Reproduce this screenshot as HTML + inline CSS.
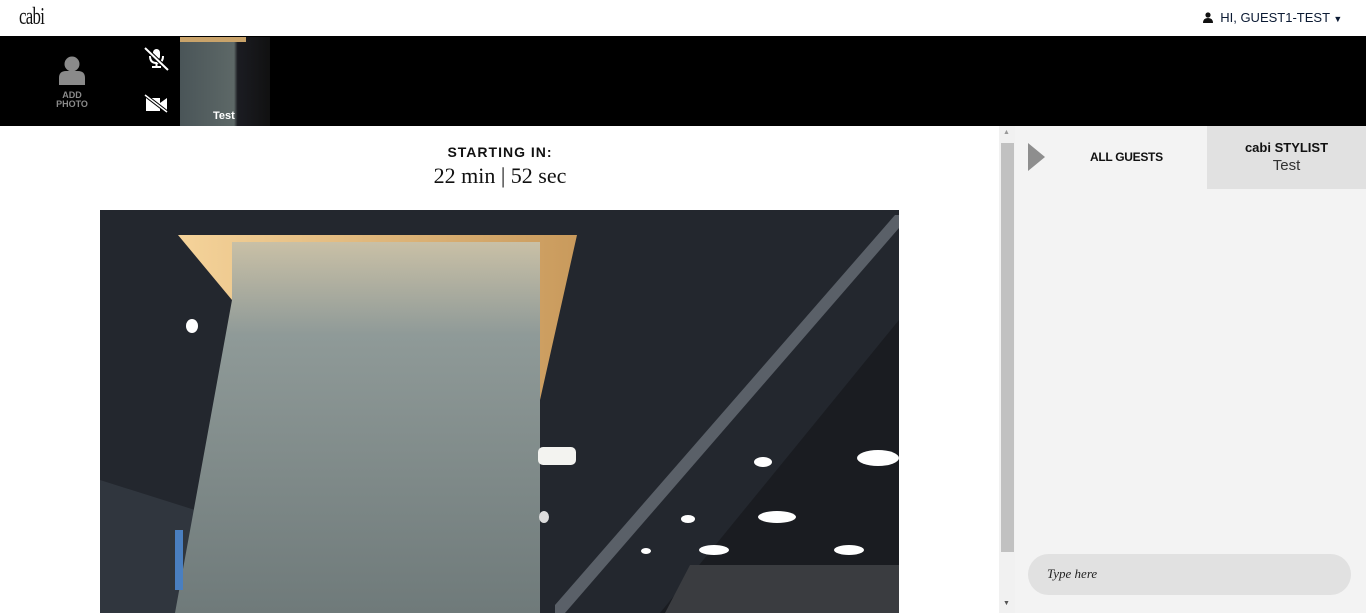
<!DOCTYPE html>
<html><head><style>
body{margin:0;width:1366px;height:613px;overflow:hidden;background:#fff;font-family:"Liberation Sans",sans-serif;position:relative}
.a{position:absolute}
</style></head><body>
<div class="a" style="left:19px;top:4px;font-family:'Liberation Serif',serif;font-size:24px;letter-spacing:-1px;transform:scaleX(0.7);transform-origin:left;color:#111">cabi</div>
<div class="a" style="left:1203px;top:10px;font-size:13px;color:#0b1a33">
<svg width="10" height="11" viewBox="0 0 10 11" style="vertical-align:-1px"><circle cx="5" cy="3" r="2.6" fill="#111"/><path d="M0 11 Q0 6 5 6 Q10 6 10 11Z" fill="#111"/></svg>
&nbsp;HI, GUEST1-TEST <span style="font-size:9px">▼</span></div>
<div class="a" style="left:0;top:36px;width:1366px;height:90px;background:#000"></div>
<svg class="a" style="left:58px;top:56px" width="28" height="29" viewBox="0 0 28 29"><circle cx="14" cy="8" r="7.5" fill="#8a8a8a"/><path d="M1 29 V22 Q1 15 8 15 H20 Q27 15 27 22 V29Z" fill="#8a8a8a"/></svg>
<div class="a" style="left:50px;top:91px;width:44px;text-align:center;color:#8a8a8a;font-weight:bold;font-size:9px;line-height:9px">ADD<br>PHOTO</div>
<svg class="a" style="left:143px;top:47px" width="27" height="24" viewBox="0 0 27 24"><rect x="10" y="2" width="7" height="11" rx="3.5" fill="#fff"/><path d="M7 9 Q7 16 13.5 16 Q20 16 20 9" stroke="#fff" stroke-width="2" fill="none"/><rect x="12.5" y="16" width="2" height="4" fill="#fff"/><rect x="9" y="19" width="9" height="2" fill="#fff"/><line x1="2" y1="1" x2="25" y2="23" stroke="#000" stroke-width="4"/><line x1="2" y1="1" x2="25" y2="23" stroke="#fff" stroke-width="2"/></svg>
<svg class="a" style="left:144px;top:94px" width="25" height="19" viewBox="0 0 25 19"><rect x="2" y="4" width="14" height="13" fill="#fff"/><path d="M16 9 L23 4 V17 L16 12Z" fill="#fff"/><line x1="1" y1="1" x2="23" y2="18" stroke="#000" stroke-width="3.5"/><line x1="1" y1="1" x2="23" y2="18" stroke="#fff" stroke-width="1.5"/></svg>
<div class="a" style="left:180px;top:37px;width:90px;height:89px;background:linear-gradient(90deg,#4a5558 0,#5d6867 60%,#1b1c22 64%,#111 100%)"></div>
<div class="a" style="left:180px;top:37px;width:66px;height:5px;background:#c9a36a"></div>
<div class="a" style="left:213px;top:110px;color:#fff;font-weight:bold;font-size:11px">Test</div>
<div class="a" style="left:0;top:144px;width:1000px;text-align:center;font-weight:bold;font-size:14px;letter-spacing:1px;color:#111">STARTING IN:</div>
<div class="a" style="left:0;top:163px;width:1000px;text-align:center;font-family:'Liberation Serif',serif;font-size:22px;color:#111">22 min | 52 sec</div>
<svg class="a" style="left:100px;top:210px" width="799" height="403" viewBox="0 0 799 403">
<defs>
<linearGradient id="p" x1="0" y1="0" x2="0" y2="1"><stop offset="0" stop-color="#c9c0a6"/><stop offset="0.25" stop-color="#8f9a98"/><stop offset="1" stop-color="#6f7a7a"/></linearGradient>
<linearGradient id="w" x1="0" y1="0" x2="1" y2="0"><stop offset="0" stop-color="#f5d39a"/><stop offset="1" stop-color="#c99a5c"/></linearGradient>
</defs>
<rect width="799" height="403" fill="#23272e"/>
<polygon points="0,270 95,300 85,403 0,403" fill="#30363e"/>
<polygon points="560,403 799,110 799,403" fill="#1a1c21"/>
<polygon points="455,395 795,5 799,5 799,18 465,403 455,403" fill="#5a6068"/>
<polygon points="565,403 590,355 799,355 799,403" fill="#3a3c40"/>
<polygon points="78,25 477,25 440,190 440,35 132,35 132,90" fill="url(#w)"/>
<polygon points="132,32 440,32 440,403 75,403 132,90" fill="url(#p)"/>
<rect x="75" y="320" width="8" height="60" fill="#4a7fc0"/>
<ellipse cx="92" cy="116" rx="6" ry="7" fill="#fff"/>
<rect x="438" y="237" width="38" height="18" rx="5" fill="#f3f3f0"/>
<ellipse cx="663" cy="252" rx="9" ry="5" fill="#fff"/>
<ellipse cx="778" cy="248" rx="21" ry="8" fill="#fff"/>
<ellipse cx="677" cy="307" rx="19" ry="6" fill="#fff"/>
<ellipse cx="588" cy="309" rx="7" ry="4" fill="#fff"/>
<ellipse cx="614" cy="340" rx="15" ry="5" fill="#fff"/>
<ellipse cx="749" cy="340" rx="15" ry="5" fill="#fff"/>
<ellipse cx="546" cy="341" rx="5" ry="3" fill="#fff"/>
<ellipse cx="444" cy="307" rx="5" ry="6" fill="#ddd"/>
</svg>
<div class="a" style="left:999px;top:126px;width:16px;height:487px;background:#f1f1f1"></div>
<div class="a" style="left:1001px;top:143px;width:13px;height:409px;background:#c1c1c1"></div>
<div class="a" style="left:1003px;top:129px;font-size:7px;color:#999">▲</div>
<div class="a" style="left:1003px;top:600px;font-size:7px;color:#555">▼</div>
<div class="a" style="left:1015px;top:126px;width:351px;height:487px;background:#f3f3f3"></div>
<div class="a" style="left:1207px;top:126px;width:159px;height:63px;background:#e1e1e1"></div>
<svg class="a" style="left:1028px;top:143px" width="17" height="28"><polygon points="0,0 17,14 0,28" fill="#8e8e8e"/></svg>
<div class="a" style="left:1090px;top:150px;font-weight:bold;font-size:12px;color:#111;letter-spacing:-0.3px">ALL GUESTS</div>
<div class="a" style="left:1207px;top:140px;width:159px;text-align:center;font-weight:bold;font-size:13px;color:#111">cabi STYLIST</div>
<div class="a" style="left:1207px;top:157px;width:159px;text-align:center;font-size:15px;color:#333">Test</div>
<div class="a" style="left:1028px;top:554px;width:323px;height:41px;border-radius:21px;background:#e1e1e1"></div>
<div class="a" style="left:1047px;top:566px;font-family:'Liberation Serif',serif;font-style:italic;font-size:13px;color:#222">Type here</div>
</body></html>
